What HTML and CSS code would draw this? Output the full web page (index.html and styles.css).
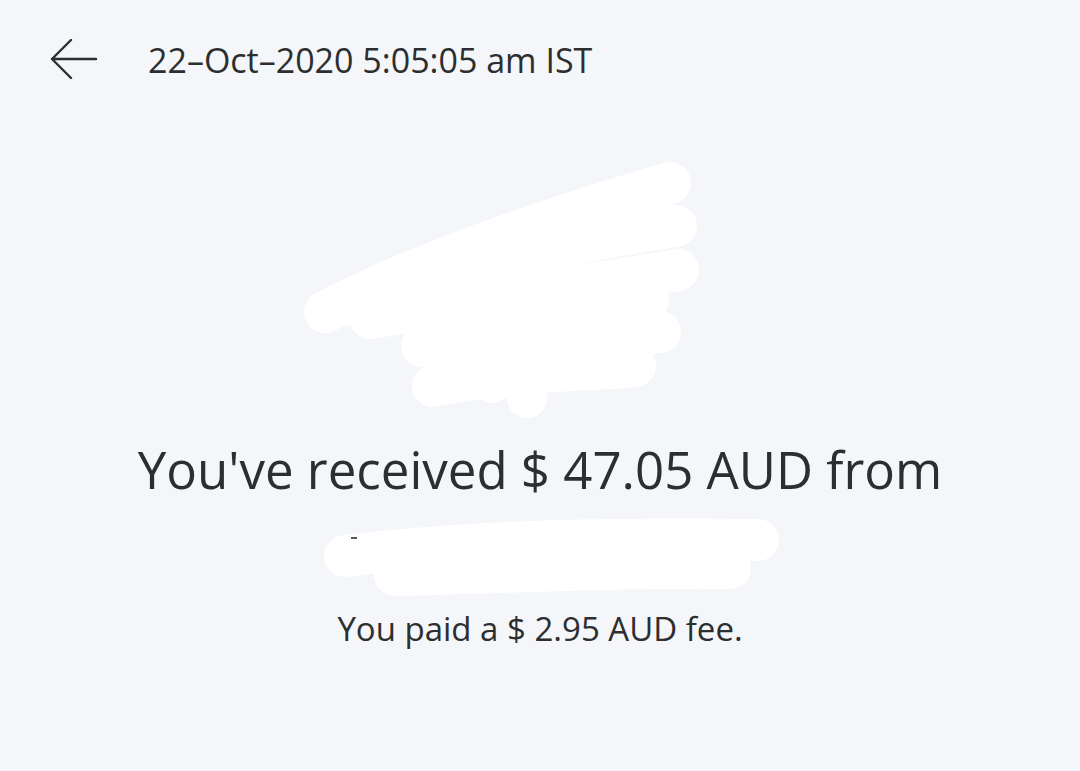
FILE: index.html
```html
<!DOCTYPE html>
<html>
<head>
<meta charset="utf-8">
<link rel="stylesheet" href="styles.css">
</head>
<body>
<div class="page">
  <header class="topbar">
    <svg class="back" width="50" height="40" viewBox="0 0 50 40" aria-label="Back">
      <path d="M47 20 H3 M22 1 L3 20 L22 39" fill="none" stroke="#2c2e2f" stroke-width="2.4" stroke-linecap="round" stroke-linejoin="round"/>
    </svg>
    <div class="date">22–Oct–2020 5:05:05 am IST</div>
  </header>
  <svg class="redact-avatar" width="1080" height="270" viewBox="0 150 1080 270">
    <g fill="none" stroke="#ffffff" stroke-linecap="round" stroke-width="42">
      <path d="M325 312 C 420 262, 560 215, 670 183"/>
      <path d="M345 305 C 470 265, 580 240, 676 226"/>
      <path d="M370 318 C 480 300, 590 285, 678 270"/>
      <path d="M410 312 C 520 305, 610 300, 648 300"/>
      <path d="M422 346 C 520 336, 600 332, 660 332"/>
      <path d="M433 386 C 520 368, 580 372, 635 366"/>
      <path d="M470 360 C 520 350, 580 345, 640 340"/>
    </g>
    <g fill="#ffffff">
      <circle cx="527" cy="398" r="20"/>
      <circle cx="492" cy="383" r="20"/>
      <circle cx="360" cy="300" r="20"/>
    </g>
  </svg>
  <h1 class="headline">You've received $ 47.05 AUD from</h1>
  <svg class="redact-name" width="1080" height="90" viewBox="0 512 1080 90">
    <g fill="none" stroke="#ffffff" stroke-linecap="round" stroke-width="42">
      <path d="M345 556 C 480 540, 620 538, 758 540"/>
      <path d="M395 575 C 520 572, 640 566, 730 568"/>
    </g>
    <path d="M351 538 L357 538" stroke="#2c2e2f" stroke-width="1.6"/>
  </svg>
  <p class="fee">You paid a $ 2.95 AUD fee.</p>
</div>
</body>
</html>
```

FILE: styles.css
```css
html, body {
  margin: 0;
  padding: 0;
  background: #f5f6fa;
}
body {
  width: 1080px;
  height: 771px;
  overflow: hidden;
  font-family: "Open Sans", "Noto Sans", sans-serif;
  color: #2c2e2f;
}
.page {
  display: flex;
  flex-direction: column;
  align-items: center;
}
.topbar {
  align-self: stretch;
  display: flex;
  align-items: center;
  height: 120px;
  padding-left: 49px;
}
.back {
  display: block;
  margin-top: -2px;
}
.date {
  margin-left: 49px;
  font-size: 34px;
  line-height: 40px;
}
.redact-avatar {
  display: block;
  margin-top: 30px;
}
.headline {
  margin: 17px 0 0 0;
  font-size: 51px;
  font-weight: 400;
  line-height: 64px;
}
.redact-name {
  display: block;
  margin-top: 11px;
}
.fee {
  margin: 5px 0 0 0;
  font-size: 33px;
  line-height: 44px;
}
```
